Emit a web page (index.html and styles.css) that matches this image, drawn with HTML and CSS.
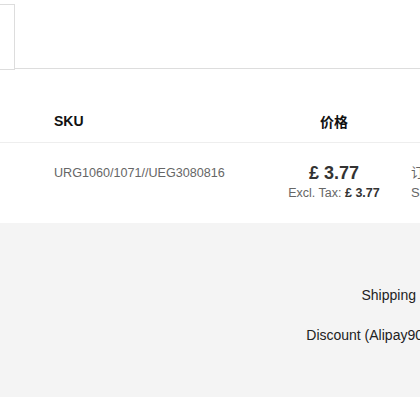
FILE: index.html
```html
<!DOCTYPE html>
<html>
<head>
<meta charset="utf-8">
<link rel="stylesheet" href="styles.css">
</head>
<body>
<div class="page">
  <div class="top">
    <div class="tab"></div>
    <div class="tab-line"></div>
  </div>
  <div class="items">
    <div class="row head">
      <div class="c-sku">SKU</div>
      <div class="c-price">价格</div>
      <div class="c-qty"></div>
    </div>
    <div class="row item">
      <div class="c-sku sku-val">URG1060/1071//UEG3080816</div>
      <div class="c-price">
        <div class="price">£ 3.77</div>
        <div class="excl">Excl. Tax: <b>£ 3.77</b></div>
      </div>
      <div class="c-qty qty">
        <div>订购: 1</div>
        <div>Shipped: 1</div>
      </div>
    </div>
  </div>
  <div class="summary">
    <div class="sum-row"><span class="label">Shipping Fee</span><span class="val">£ 0.00</span></div>
    <div class="sum-row"><span class="label">Discount (Alipay90%):</span><span class="val">-£ 0.38</span></div>
  </div>
</div>
</body>
</html>
```
FILE: styles.css
```css
html, body {
  margin: 0;
  padding: 0;
  overflow: hidden;
  background: #fff;
}
.page {
  width: 640px;
  font-family: "Liberation Sans", Arial, "Noto Sans CJK SC", sans-serif;
  color: #333;
}
.top {
  display: flex;
  align-items: flex-start;
  padding-top: 4px;
  height: 66px;
}
.tab {
  width: 15px;
  height: 66px;
  box-sizing: border-box;
  border: 1px solid #ddd;
  border-left: 0;
}
.tab-line {
  flex: 1;
  height: 65px;
  border-bottom: 1px solid #ddd;
  box-sizing: border-box;
}
.items {
  margin-top: 30px;
}
.row {
  display: grid;
  grid-template-columns: 203px 154px 1fr;
  padding-left: 54px;
}
.head {
  height: 42px;
  align-items: center;
  border-bottom: 1px solid #eee;
  font-size: 14px;
  font-weight: bold;
  color: #111;
}
.head .c-price {
  text-align: center;
}
.item {
  padding: 20px 0 20px 54px;
}
.sku-val {
  font-size: 12.6px;
  line-height: 20px;
  color: #666;
}
.c-price {
  text-align: center;
}
.price {
  font-size: 18px;
  font-weight: bold;
  line-height: 20px;
  color: #333;
}
.excl {
  font-size: 12.5px;
  line-height: 20px;
  color: #666;
}
.excl b {
  color: #333;
}
.qty {
  font-size: 13px;
  line-height: 20px;
  color: #666;
}
.summary {
  background: #f4f4f4;
  padding: 52px 0 42px;
}
.sum-row {
  display: grid;
  grid-template-columns: 444px 1fr;
  height: 40px;
  align-items: center;
  font-size: 14px;
  color: #222;
}
.label {
  text-align: right;
}
.val {
  padding-left: 20px;
}
```
